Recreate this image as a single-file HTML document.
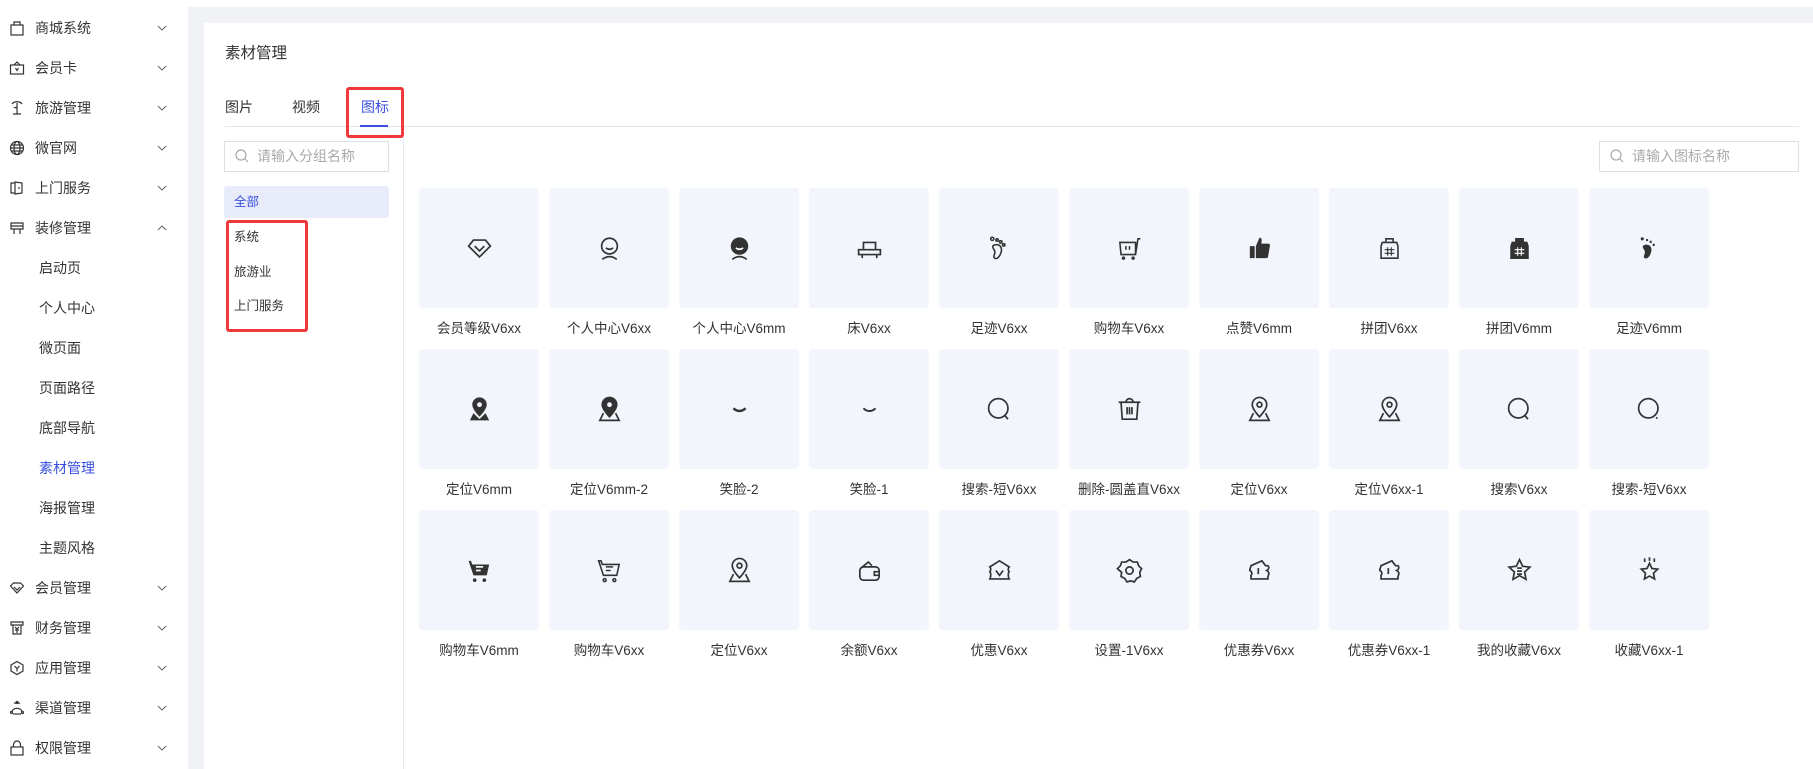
<!DOCTYPE html>
<html><head><meta charset="utf-8"><style>
*{margin:0;padding:0;box-sizing:border-box}
body{width:1813px;height:769px;overflow:hidden;background:#f0f2f5;font-family:"Liberation Sans","Noto Sans CJK SC",sans-serif;color:#333;position:relative}
.side{position:absolute;left:0;top:0;width:188px;height:769px;background:#fff}
.it{position:absolute;left:0;width:188px;height:40px;font-size:14px;line-height:40px}
.it .ic{position:absolute;left:9px;top:12px;width:16px;height:16px}
.it .tx{position:absolute;left:35px}
.it .ch{position:absolute;left:157px;top:15px;width:10px;height:10px}
.sub{position:absolute;left:39px;font-size:14px;line-height:40px;height:40px}
.top{position:absolute;left:188px;top:0;right:0;height:7px;background:#fff}
.main{position:absolute;left:204px;top:23px;right:0;bottom:0;background:#fff}
.abs{position:absolute}
.search{position:absolute;border:1px solid #dcdfe6;height:31px;font-size:14px;color:#aaa;line-height:29px;padding-left:32px}
.search svg{position:absolute;left:10px;top:7px}
.grid{position:absolute;left:419px;top:188px;display:grid;grid-template-columns:repeat(10,120px);column-gap:10px;grid-auto-rows:161px}
.c{position:relative}
.card{width:120px;height:120px;background:#f2f5fc;border-radius:4px;display:flex;align-items:center;justify-content:center}
.card svg{width:29px;height:29px}
.lb{text-align:center;font-size:13.5px;line-height:20px;margin-top:11px;color:#333;white-space:nowrap}
.red{position:absolute;border:3px solid #f0383d;border-radius:3px}
</style></head><body>
<div class="side">
<div class="it" style="top:8px"><svg class="ic" viewBox="0 0 16 16" fill="none" stroke="#333" stroke-width="1.2"><rect x="2" y="5" width="12" height="10"/><path d="M5 5V2h6v3"/></svg><span class="tx">商城系统</span><svg class="ch" viewBox="0 0 10 10" fill="none" stroke="#666"><path d="M1 3l4 4 4-4"/></svg></div>
<div class="it" style="top:48px"><svg class="ic" viewBox="0 0 16 16" fill="none" stroke="#333" stroke-width="1.2"><rect x="1.5" y="5" width="13" height="9"/><path d="M5 5l3-3 3 3M6.5 8l1.5 2.5L9.5 8"/></svg><span class="tx">会员卡</span><svg class="ch" viewBox="0 0 10 10" fill="none" stroke="#666"><path d="M1 3l4 4 4-4"/></svg></div>
<div class="it" style="top:88px"><svg class="ic" viewBox="0 0 16 16" fill="none" stroke="#333" stroke-width="1.2"><path d="M3 4c2-3 8-3 10 0M8 3v11M4 14h8M5 7c1 1 2 1 3 0"/></svg><span class="tx">旅游管理</span><svg class="ch" viewBox="0 0 10 10" fill="none" stroke="#666"><path d="M1 3l4 4 4-4"/></svg></div>
<div class="it" style="top:128px"><svg class="ic" viewBox="0 0 16 16" fill="none" stroke="#333" stroke-width="1.2"><circle cx="8" cy="8" r="6.5"/><ellipse cx="8" cy="8" rx="3" ry="6.5"/><path d="M1.5 8h13M2.5 5h11M2.5 11h11"/></svg><span class="tx">微官网</span><svg class="ch" viewBox="0 0 10 10" fill="none" stroke="#666"><path d="M1 3l4 4 4-4"/></svg></div>
<div class="it" style="top:168px"><svg class="ic" viewBox="0 0 16 16" fill="none" stroke="#333" stroke-width="1.2"><path d="M2 3h4v10H2zM6 2l7 1v10l-7 1z"/><path d="M10 7v2"/></svg><span class="tx">上门服务</span><svg class="ch" viewBox="0 0 10 10" fill="none" stroke="#666"><path d="M1 3l4 4 4-4"/></svg></div>
<div class="it" style="top:208px"><svg class="ic" viewBox="0 0 16 16" fill="none" stroke="#333" stroke-width="1.2"><path d="M2 3h12v6H2zM5 9v5M11 9v5M2 6h12"/></svg><span class="tx">装修管理</span><svg class="ch" viewBox="0 0 10 10" fill="none" stroke="#666"><path d="M1 7l4-4 4 4"/></svg></div>
<div class="sub" style="top:248px">启动页</div>
<div class="sub" style="top:288px">个人中心</div>
<div class="sub" style="top:328px">微页面</div>
<div class="sub" style="top:368px">页面路径</div>
<div class="sub" style="top:408px">底部导航</div>
<div class="sub" style="top:448px;color:#3a4fe0">素材管理</div>
<div class="sub" style="top:488px">海报管理</div>
<div class="sub" style="top:528px">主题风格</div>
<div class="it" style="top:568px"><svg class="ic" viewBox="0 0 16 16" fill="none" stroke="#333" stroke-width="1.2"><path d="M1.5 6l3-3h7l3 3-6.5 7z"/><path d="M5 7l3 3 3-3"/></svg><span class="tx">会员管理</span><svg class="ch" viewBox="0 0 10 10" fill="none" stroke="#666"><path d="M1 3l4 4 4-4"/></svg></div>
<div class="it" style="top:608px"><svg class="ic" viewBox="0 0 16 16" fill="none" stroke="#333" stroke-width="1.2"><path d="M2 2h12v3H2zM4 5v9h8V5M6 7l2 2 2-2M8 9v4M6 10h4"/></svg><span class="tx">财务管理</span><svg class="ch" viewBox="0 0 10 10" fill="none" stroke="#666"><path d="M1 3l4 4 4-4"/></svg></div>
<div class="it" style="top:648px"><svg class="ic" viewBox="0 0 16 16" fill="none" stroke="#333" stroke-width="1.2"><path d="M8 1.5l6 3.5v6l-6 3.5L2 11V5z"/><path d="M5.5 6L8 8.5 10.5 6M8 8.5v3"/></svg><span class="tx">应用管理</span><svg class="ch" viewBox="0 0 10 10" fill="none" stroke="#666"><path d="M1 3l4 4 4-4"/></svg></div>
<div class="it" style="top:688px"><svg class="ic" viewBox="0 0 16 16" fill="none" stroke="#333" stroke-width="1.2"><path d="M3 11a6 6 0 0 1 10 0M5 3.5a6 6 0 0 1 6 0"/><circle cx="8" cy="2.5" r="1"/><circle cx="2.5" cy="12.5" r="1"/><circle cx="13.5" cy="12.5" r="1"/><path d="M4 14h8"/></svg><span class="tx">渠道管理</span><svg class="ch" viewBox="0 0 10 10" fill="none" stroke="#666"><path d="M1 3l4 4 4-4"/></svg></div>
<div class="it" style="top:728px"><svg class="ic" viewBox="0 0 16 16" fill="none" stroke="#333" stroke-width="1.2"><rect x="2" y="7" width="12" height="8"/><path d="M4.5 7V4.5a3.5 3.5 0 0 1 7 0V7"/></svg><span class="tx">权限管理</span><svg class="ch" viewBox="0 0 10 10" fill="none" stroke="#666"><path d="M1 3l4 4 4-4"/></svg></div>
</div>
<div class="top"></div>
<div class="main"></div>
<div class="abs" style="left:225px;top:44px;font-size:15.5px;line-height:20px">素材管理</div>
<div class="abs" style="left:225px;top:97px;font-size:14px;line-height:20px">图片</div>
<div class="abs" style="left:292px;top:97px;font-size:14px;line-height:20px">视频</div>
<div class="abs" style="left:361px;top:97px;font-size:14px;line-height:20px;color:#3a4fe0">图标</div>
<div class="abs" style="left:225px;top:126px;width:1574px;height:1px;background:#e4e6ec"></div>
<div class="abs" style="left:360px;top:125px;width:28px;height:2px;background:#3a4fe0"></div>
<div class="red" style="left:346px;top:87px;width:58px;height:51px"></div>
<div class="abs" style="left:403px;top:137px;width:1px;height:632px;background:#e8eaf0"></div>
<div class="search" style="left:224px;top:141px;width:165px"><svg width="14" height="14" viewBox="0 0 14 14" fill="none" stroke="#aaa" stroke-width="1.2"><circle cx="6" cy="6" r="5"/><path d="M10 10l3 3"/></svg>请输入分组名称</div>
<div class="search" style="left:1599px;top:141px;width:200px"><svg width="14" height="14" viewBox="0 0 14 14" fill="none" stroke="#aaa" stroke-width="1.2"><circle cx="6" cy="6" r="5"/><path d="M10 10l3 3"/></svg>请输入图标名称</div>
<div class="abs" style="left:224px;top:186px;width:165px;height:32px;background:#e8ebfa;border-radius:3px;font-size:12.5px;line-height:32px;padding-left:10px;color:#3a4fe0">全部</div>
<div class="abs" style="left:234px;top:227px;font-size:12.5px;line-height:20px">系统</div>
<div class="abs" style="left:234px;top:262px;font-size:12.5px;line-height:20px">旅游业</div>
<div class="abs" style="left:234px;top:296px;font-size:12.5px;line-height:20px">上门服务</div>
<div class="red" style="left:226px;top:220px;width:82px;height:112px"></div>

<div class="grid">
<div class="c"><div class="card"><svg viewBox="0 0 24 24" fill="none" stroke="#333" stroke-width="1.4"><path d="M3 10l4-5h10l4 5-9 9z"/><path d="M8 10l4 4 4-4"/></svg></div><div class="lb">会员等级V6xx</div></div>
<div class="c"><div class="card"><svg viewBox="0 0 24 24" fill="none" stroke="#333" stroke-width="1.4"><circle cx="12" cy="10" r="6.5"/><path d="M9 11.5c2 1.5 4 1.5 6 0M6 21c4-3 8-3 12 0"/></svg></div><div class="lb">个人中心V6xx</div></div>
<div class="c"><div class="card"><svg viewBox="0 0 24 24" fill="none" stroke="#333" stroke-width="1.4"><circle cx="12" cy="10" r="6.5" fill="#333"/><path d="M9 11.5c2 1.5 4 1.5 6 0" stroke="#fff"/><path d="M6 21c4-3 8-3 12 0"/></svg></div><div class="lb">个人中心V6mm</div></div>
<div class="c"><div class="card"><svg viewBox="0 0 24 24" fill="none" stroke="#333" stroke-width="1.4"><path d="M7 13V7h10v6M3 13h18v4H3zM6 17v3M18 17v3"/></svg></div><div class="lb">床V6xx</div></div>
<div class="c"><div class="card"><svg viewBox="0 0 24 24" fill="none" stroke="#333" stroke-width="1.3"><path d="M8 9c4-1 7 2 5 7-1 3-3 5-5 4-2-1 1-4 0-6-1-2-3-4 0-5z"/><circle cx="6" cy="4" r="1.3"/><circle cx="10" cy="5" r="1"/><circle cx="13" cy="6.5" r="1"/><circle cx="15.5" cy="9" r="1"/></svg></div><div class="lb">足迹V6xx</div></div>
<div class="c"><div class="card"><svg viewBox="0 0 24 24" fill="none" stroke="#333" stroke-width="1.3"><path d="M4 7h13v10H5zM17 17l2-13h2M9 10v3M12 10v3"/><circle cx="7" cy="20" r=".8"/><circle cx="15" cy="20" r=".8"/></svg></div><div class="lb">购物车V6xx</div></div>
<div class="c"><div class="card"><svg viewBox="0 0 24 24" fill="#333"><path d="M4 10h4v10H4zM9 10l3-7c2 0 2 2 1.5 5H19c1.5 0 2 1 1.5 2.5L19 19c-.5 1-1 1-2 1H9z"/></svg></div><div class="lb">点赞V6mm</div></div>
<div class="c"><div class="card"><svg viewBox="0 0 24 24" fill="none" stroke="#333" stroke-width="1.3"><path d="M9 7V4h6v3M6 7h12l1 3v10H5V10z"/><path d="M10.5 11v7M13.5 11v7M8 13h8M8 16h8" stroke-width=".9"/></svg></div><div class="lb">拼团V6xx</div></div>
<div class="c"><div class="card"><svg viewBox="0 0 24 24" fill="none" stroke="#333" stroke-width="1.3"><path d="M9 7V4h6v3M6 7h12l1 3v10H5V10z" fill="#333"/><path d="M10.5 11v7M13.5 11v7M8 13h8M8 16h8" stroke="#fff" stroke-width=".9"/></svg></div><div class="lb">拼团V6mm</div></div>
<div class="c"><div class="card"><svg viewBox="0 0 24 24" fill="#333"><path d="M8 9c4-1 7 2 5 7-1 3-3 5-5 4-2-1 1-4 0-6-1-2-3-4 0-5z"/><circle cx="6" cy="4" r="1.3"/><circle cx="10" cy="5" r="1"/><circle cx="13" cy="6.5" r="1"/><circle cx="15.5" cy="9" r="1"/></svg></div><div class="lb">足迹V6mm</div></div>

<div class="c"><div class="card"><svg viewBox="0 0 24 24" fill="#333"><path d="M12 2a6 6 0 0 0-6 6c0 4 6 10 6 10s6-6 6-10a6 6 0 0 0-6-6z"/><circle cx="12" cy="8" r="2" fill="#f2f5fc"/><path d="M7 15l-3 6h16l-3-6-5 5z"/></svg></div><div class="lb">定位V6mm</div></div>
<div class="c"><div class="card"><svg viewBox="0 0 24 24" fill="none" stroke="#333" stroke-width="1.4"><path d="M12 2a6 6 0 0 0-6 6c0 4 6 10 6 10s6-6 6-10a6 6 0 0 0-6-6z" fill="#333"/><circle cx="12" cy="8" r="2" fill="#f2f5fc" stroke="none"/><path d="M7 15l-3 6h16l-3-6"/></svg></div><div class="lb">定位V6mm-2</div></div>
<div class="c"><div class="card"><svg viewBox="0 0 24 24" fill="none" stroke="#333" stroke-width="2"><path d="M7 11c3 3 7 3 10 0"/></svg></div><div class="lb">笑脸-2</div></div>
<div class="c"><div class="card"><svg viewBox="0 0 24 24" fill="none" stroke="#333" stroke-width="1.6"><path d="M7 11c3 3 7 3 10 0"/></svg></div><div class="lb">笑脸-1</div></div>
<div class="c"><div class="card"><svg viewBox="0 0 24 24" fill="none" stroke="#333" stroke-width="1.4"><circle cx="11" cy="11" r="8"/><path d="M16.5 17l2.5 3"/></svg></div><div class="lb">搜索-短V6xx</div></div>
<div class="c"><div class="card"><svg viewBox="0 0 24 24" fill="none" stroke="#333" stroke-width="1.4"><path d="M3 6h18M9 6a3 3 0 0 1 6 0M5 6l1 14h12l1-14M10 10v6M12 10v6M14 10v6"/></svg></div><div class="lb">删除-圆盖直V6xx</div></div>
<div class="c"><div class="card"><svg viewBox="0 0 24 24" fill="none" stroke="#333" stroke-width="1.4"><path d="M12 2a6 6 0 0 0-6 6c0 4 6 10 6 10s6-6 6-10a6 6 0 0 0-6-6z"/><circle cx="12" cy="8" r="2"/><path d="M7 15l-3 6h16l-3-6"/></svg></div><div class="lb">定位V6xx</div></div>
<div class="c"><div class="card"><svg viewBox="0 0 24 24" fill="none" stroke="#333" stroke-width="1.4"><path d="M12 2a6 6 0 0 0-6 6c0 4 6 10 6 10s6-6 6-10a6 6 0 0 0-6-6z"/><circle cx="12" cy="8" r="2"/><path d="M7 15l-3 6h16l-3-6"/></svg></div><div class="lb">定位V6xx-1</div></div>
<div class="c"><div class="card"><svg viewBox="0 0 24 24" fill="none" stroke="#333" stroke-width="1.4"><circle cx="11" cy="11" r="8"/><path d="M16.5 17l2.5 3"/></svg></div><div class="lb">搜索V6xx</div></div>
<div class="c"><div class="card"><svg viewBox="0 0 24 24" fill="none" stroke="#333" stroke-width="1.4"><circle cx="11" cy="11" r="8"/><path d="M17.5 18.5l1 1"/></svg></div><div class="lb">搜索-短V6xx</div></div>

<div class="c"><div class="card"><svg viewBox="0 0 24 24" fill="#333"><path d="M3 4h2l1 3h14l-2 9H7z"/><path d="M9 9h6M9 12h4" stroke="#f2f5fc" stroke-width="1.5"/><circle cx="8" cy="20" r="1.5"/><circle cx="16" cy="20" r="1.5"/></svg></div><div class="lb">购物车V6mm</div></div>
<div class="c"><div class="card"><svg viewBox="0 0 24 24" fill="none" stroke="#333" stroke-width="1.3"><path d="M3 4h2l1 3h14l-2 9H7zM9 9h6M9 12h4"/><circle cx="8" cy="20" r="1.2"/><circle cx="16" cy="20" r="1.2"/></svg></div><div class="lb">购物车V6xx</div></div>
<div class="c"><div class="card"><svg viewBox="0 0 24 24" fill="none" stroke="#333" stroke-width="1.4"><path d="M12 2a6 6 0 0 0-6 6c0 4 6 10 6 10s6-6 6-10a6 6 0 0 0-6-6z"/><circle cx="12" cy="8" r="2"/><path d="M7 15l-3 6h16l-3-6"/></svg></div><div class="lb">定位V6xx</div></div>
<div class="c"><div class="card"><svg viewBox="0 0 24 24" fill="none" stroke="#333" stroke-width="1.4"><path d="M5 10l6-5 3 3"/><rect x="4" y="9" width="16" height="11" rx="3"/><path d="M20 13h-4v3h4"/></svg></div><div class="lb">余额V6xx</div></div>
<div class="c"><div class="card"><svg viewBox="0 0 24 24" fill="none" stroke="#333" stroke-width="1.4"><path d="M4 9l8-5 8 5c-1 1-1 3 0 4-1 1-1 4 0 6H4c1-2 1-5 0-6 1-1 1-3 0-4z"/><path d="M9 12l3 4 3-4"/></svg></div><div class="lb">优惠V6xx</div></div>
<div class="c"><div class="card"><svg viewBox="0 0 24 24" fill="none" stroke="#333" stroke-width="1.4"><path d="M12 3l3 2 3.5 0 1 3 2.5 2.5-1.5 3 .5 3.5-3 1.5-2 3-3-1-3 1-2-3-3-1.5.5-3.5L2 10.5 4.5 8l1-3H9z"/><circle cx="12" cy="12" r="3"/></svg></div><div class="lb">设置-1V6xx</div></div>
<div class="c"><div class="card"><svg viewBox="0 0 24 24" fill="none" stroke="#333" stroke-width="1.4"><path d="M5 8l9-4 3 4h2c1 1 1 3-1 4 2 1 2 3 1 5v2H5v-3c1-1 1-3-1-4 0-2 1-3 1-4z"/><path d="M11 10v5"/></svg></div><div class="lb">优惠券V6xx</div></div>
<div class="c"><div class="card"><svg viewBox="0 0 24 24" fill="none" stroke="#333" stroke-width="1.4"><path d="M5 8l9-4 3 4h2c1 1 1 3-1 4 2 1 2 3 1 5v2H5v-3c1-1 1-3-1-4 0-2 1-3 1-4z"/><path d="M11 10v5"/></svg></div><div class="lb">优惠券V6xx-1</div></div>
<div class="c"><div class="card"><svg viewBox="0 0 24 24" fill="none" stroke="#333" stroke-width="1.4"><path d="M12 3l2.6 5.5 6 .7-4.4 4.1 1.2 6L12 16.3 6.6 19.3l1.2-6L3.4 9.2l6-.7z"/><path d="M10 10h4M10 12.5h4M10 15h4"/></svg></div><div class="lb">我的收藏V6xx</div></div>
<div class="c"><div class="card"><svg viewBox="0 0 24 24" fill="none" stroke="#333" stroke-width="1.4"><path d="M12 6l2 4.3 4.8.6-3.5 3.3.9 4.8L12 16.6 7.8 19l.9-4.8-3.5-3.3 4.8-.6z"/><path d="M8 2v3M12 1v3M16 2v3"/></svg></div><div class="lb">收藏V6xx-1</div></div>
</div>
</body></html>
